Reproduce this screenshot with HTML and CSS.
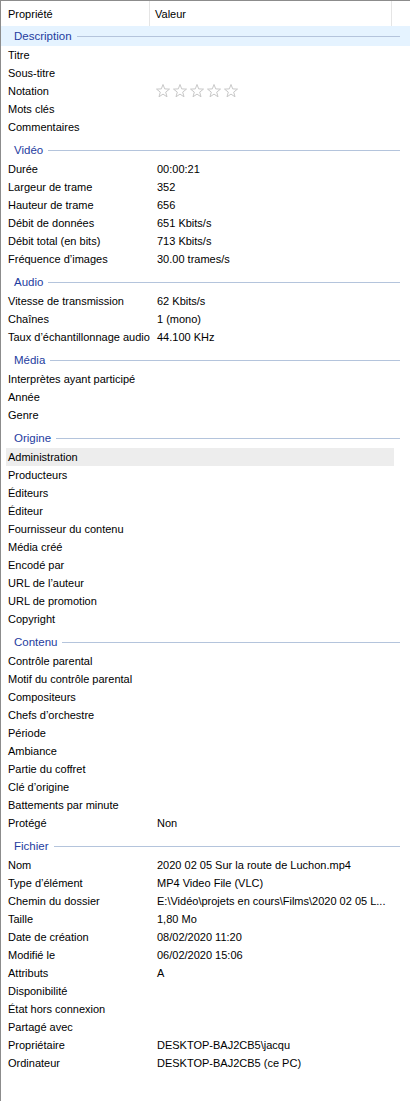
FILE: index.html
```html
<!DOCTYPE html>
<html lang="fr">
<head>
<meta charset="utf-8">
<title>Propriétés</title>
<link rel="stylesheet" href="styles.css">
</head>
<body>
<div class="panel">
  <div class="colhead">
    <div class="ch ch-prop">Propriété</div>
    <div class="ch ch-val">Valeur</div>
    <div class="ch ch-rest"></div>
  </div>

  <div class="group first">
    <div class="ghead hover"><span>Description</span><i class="gline"></i></div>
    <div class="row"><span class="k">Titre</span><span class="v"></span></div>
    <div class="row"><span class="k">Sous-titre</span><span class="v"></span></div>
    <div class="row"><span class="k">Notation</span><span class="v stars">
      <svg width="84" height="16" viewBox="0 0 84 16">
        <g fill="none" stroke="#c8c8c8" stroke-width="1" stroke-linejoin="miter">
          <polygon points="7,1.5 8.7,5.9 13.5,6.1 9.7,9.1 11,13.8 7,11.1 3,13.8 4.3,9.1 0.5,6.1 5.3,5.9"/>
          <polygon transform="translate(17,0)" points="7,1.5 8.7,5.9 13.5,6.1 9.7,9.1 11,13.8 7,11.1 3,13.8 4.3,9.1 0.5,6.1 5.3,5.9"/>
          <polygon transform="translate(34,0)" points="7,1.5 8.7,5.9 13.5,6.1 9.7,9.1 11,13.8 7,11.1 3,13.8 4.3,9.1 0.5,6.1 5.3,5.9"/>
          <polygon transform="translate(51,0)" points="7,1.5 8.7,5.9 13.5,6.1 9.7,9.1 11,13.8 7,11.1 3,13.8 4.3,9.1 0.5,6.1 5.3,5.9"/>
          <polygon transform="translate(68,0)" points="7,1.5 8.7,5.9 13.5,6.1 9.7,9.1 11,13.8 7,11.1 3,13.8 4.3,9.1 0.5,6.1 5.3,5.9"/>
        </g>
      </svg></span></div>
    <div class="row"><span class="k">Mots clés</span><span class="v"></span></div>
    <div class="row"><span class="k">Commentaires</span><span class="v"></span></div>
  </div>

  <div class="group">
    <div class="ghead"><span>Vidéo</span><i class="gline"></i></div>
    <div class="row"><span class="k">Durée</span><span class="v">00:00:21</span></div>
    <div class="row"><span class="k">Largeur de trame</span><span class="v">352</span></div>
    <div class="row"><span class="k">Hauteur de trame</span><span class="v">656</span></div>
    <div class="row"><span class="k">Débit de données</span><span class="v">651 Kbits/s</span></div>
    <div class="row"><span class="k">Débit total (en bits)</span><span class="v">713 Kbits/s</span></div>
    <div class="row"><span class="k">Fréquence d’images</span><span class="v">30.00 trames/s</span></div>
  </div>

  <div class="group">
    <div class="ghead"><span>Audio</span><i class="gline"></i></div>
    <div class="row"><span class="k">Vitesse de transmission</span><span class="v">62 Kbits/s</span></div>
    <div class="row"><span class="k">Chaînes</span><span class="v">1 (mono)</span></div>
    <div class="row"><span class="k">Taux d’échantillonnage audio</span><span class="v">44.100 KHz</span></div>
  </div>

  <div class="group">
    <div class="ghead"><span>Média</span><i class="gline"></i></div>
    <div class="row"><span class="k">Interprètes ayant participé</span><span class="v"></span></div>
    <div class="row"><span class="k">Année</span><span class="v"></span></div>
    <div class="row"><span class="k">Genre</span><span class="v"></span></div>
  </div>

  <div class="group">
    <div class="ghead"><span>Origine</span><i class="gline"></i></div>
    <div class="row selected"><span class="k">Administration</span><span class="v"></span></div>
    <div class="row"><span class="k">Producteurs</span><span class="v"></span></div>
    <div class="row"><span class="k">Éditeurs</span><span class="v"></span></div>
    <div class="row"><span class="k">Éditeur</span><span class="v"></span></div>
    <div class="row"><span class="k">Fournisseur du contenu</span><span class="v"></span></div>
    <div class="row"><span class="k">Média créé</span><span class="v"></span></div>
    <div class="row"><span class="k">Encodé par</span><span class="v"></span></div>
    <div class="row"><span class="k">URL de l’auteur</span><span class="v"></span></div>
    <div class="row"><span class="k">URL de promotion</span><span class="v"></span></div>
    <div class="row"><span class="k">Copyright</span><span class="v"></span></div>
  </div>

  <div class="group">
    <div class="ghead"><span>Contenu</span><i class="gline"></i></div>
    <div class="row"><span class="k">Contrôle parental</span><span class="v"></span></div>
    <div class="row"><span class="k">Motif du contrôle parental</span><span class="v"></span></div>
    <div class="row"><span class="k">Compositeurs</span><span class="v"></span></div>
    <div class="row"><span class="k">Chefs d’orchestre</span><span class="v"></span></div>
    <div class="row"><span class="k">Période</span><span class="v"></span></div>
    <div class="row"><span class="k">Ambiance</span><span class="v"></span></div>
    <div class="row"><span class="k">Partie du coffret</span><span class="v"></span></div>
    <div class="row"><span class="k">Clé d’origine</span><span class="v"></span></div>
    <div class="row"><span class="k">Battements par minute</span><span class="v"></span></div>
    <div class="row"><span class="k">Protégé</span><span class="v">Non</span></div>
  </div>

  <div class="group">
    <div class="ghead"><span>Fichier</span><i class="gline"></i></div>
    <div class="row"><span class="k">Nom</span><span class="v">2020 02 05 Sur la route de Luchon.mp4</span></div>
    <div class="row"><span class="k">Type d’élément</span><span class="v">MP4 Video File (VLC)</span></div>
    <div class="row"><span class="k">Chemin du dossier</span><span class="v">E:\Vidéo\projets en cours\Films\2020 02 05 L...</span></div>
    <div class="row"><span class="k">Taille</span><span class="v">1,80 Mo</span></div>
    <div class="row"><span class="k">Date de création</span><span class="v">08/02/2020 11:20</span></div>
    <div class="row"><span class="k">Modifié le</span><span class="v">06/02/2020 15:06</span></div>
    <div class="row"><span class="k">Attributs</span><span class="v">A</span></div>
    <div class="row"><span class="k">Disponibilité</span><span class="v"></span></div>
    <div class="row"><span class="k">État hors connexion</span><span class="v"></span></div>
    <div class="row"><span class="k">Partagé avec</span><span class="v"></span></div>
    <div class="row"><span class="k">Propriétaire</span><span class="v">DESKTOP-BAJ2CB5\jacqu</span></div>
    <div class="row"><span class="k">Ordinateur</span><span class="v">DESKTOP-BAJ2CB5 (ce PC)</span></div>
  </div>
</div>
</body>
</html>
```

FILE: styles.css
```css
html, body {
  margin: 0;
  padding: 0;
  background: #ffffff;
}
body {
  font-family: "Liberation Sans", Arial, sans-serif;
  font-size: 11px;
  color: #000000;
}
.panel {
  width: 409px;
  height: 1100px;
  border-left: 1px solid #8c8c8c;
  border-top: 1px solid #8c8c8c;
  overflow: hidden;
}
.colhead {
  display: grid;
  grid-template-columns: 149px 242px 1fr;
  height: 25px;
}
.ch {
  display: flex;
  align-items: center;
  padding-left: 7px;
  border-right: 1px solid #e5e5e5;
}
.ch-val { padding-left: 5px; }
.ch-rest { border-right: none; }
.group { margin-top: 4px; }
.group.first { margin-top: 0; }
.ghead {
  height: 20px;
  display: flex;
  align-items: center;
  padding-left: 13px;
  padding-right: 10px;
  gap: 5px;
  color: #1e3ca0;
  font-size: 11.5px;
}
.ghead.hover { background: #e5f3ff; }
.gline {
  flex: 1;
  height: 1px;
  background: #b4c4dc;
  margin-top: 1px;
}
.row {
  display: grid;
  grid-template-columns: 149px 1fr;
  height: 18px;
  align-items: center;
  margin-right: 16px;
  white-space: nowrap;
}
.row.selected {
  background: #ededed;
  margin-left: 5px;
}
.row.selected .k { padding-left: 2px; }
.k { padding-left: 7px; overflow: hidden; }
.v { padding-left: 7px; overflow: hidden; }
.stars { display: flex; align-items: center; padding-left: 6px; }
.stars svg { display: block; }
```
